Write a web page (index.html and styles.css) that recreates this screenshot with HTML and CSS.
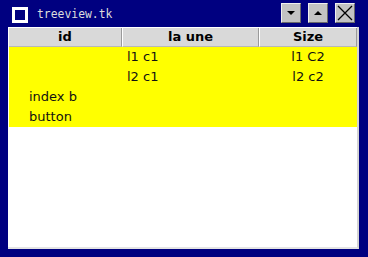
FILE: index.html
```html
<!DOCTYPE html>
<html>
<head>
<meta charset="utf-8">
<link rel="stylesheet" href="styles.css">
</head>
<body>
<div class="window">
  <div class="titlebar">
    <span class="app-icon"></span>
    <span class="title">treeview.tk</span>
    <div class="controls">
      <span class="btn"><svg width="10" height="10" viewBox="0 0 10 10"><polygon points="1,3 9,3 5,7" fill="#000"/></svg></span>
      <span class="btn"><svg width="10" height="10" viewBox="0 0 10 10"><polygon points="1,7 9,7 5,3" fill="#000"/></svg></span>
      <span class="btn"><svg width="18" height="18" viewBox="0 0 18 18"><path d="M2 2 L16 16 M16 2 L2 16" stroke="#000" stroke-width="1.3" fill="none"/></svg></span>
    </div>
  </div>
  <div class="content">
    <div class="tree">
      <div class="head">
        <div class="hcell">id</div>
        <div class="hcell">la une</div>
        <div class="hcell">Size</div>
      </div>
      <div class="rows">
        <div class="row"><span class="c1"></span><span class="c2">l1 c1</span><span class="c3">l1 C2</span></div>
        <div class="row"><span class="c1"></span><span class="c2">l2 c1</span><span class="c3">l2 c2</span></div>
        <div class="row"><span class="c1">index b</span><span class="c2"></span><span class="c3"></span></div>
        <div class="row"><span class="c1">button</span><span class="c2"></span><span class="c3"></span></div>
      </div>
    </div>
  </div>
</div>
</body>
</html>
```

FILE: styles.css
```css
html, body {
  margin: 0;
  padding: 0;
  background: #000080;
}
.window {
  width: 368px;
  height: 257px;
  display: flex;
  flex-direction: column;
  background: #000080;
}
.titlebar {
  height: 27px;
  display: flex;
  align-items: center;
  padding-left: 12px;
  box-sizing: border-box;
}
.app-icon {
  width: 10px;
  height: 10px;
  border: 3px solid #ffffff;
  flex: none;
  margin-top: 2px;
}
.title {
  margin-left: 9px;
  font-family: "DejaVu Sans Mono", monospace;
  font-size: 11.4px;
  color: #dcdcdc;
}
.controls {
  margin-left: auto;
  margin-right: 13px;
  display: flex;
  gap: 7px;
  margin-top: -1px;
}
.btn {
  width: 18px;
  height: 18px;
  background: #c3c3c3;
  border-top: 1px solid #f0f0f0;
  border-left: 1px solid #f0f0f0;
  border-right: 1px solid #6a6a6a;
  border-bottom: 1px solid #6a6a6a;
  display: flex;
  align-items: center;
  justify-content: center;
}
.content {
  flex: 1;
  margin: 0 9px 8px 8px;
  background: #ffffff;
  padding: 1px 0 0 1px;
  border-right: 2px solid #d4d4d4;
  border-bottom: 2px solid #e4e4e4;
}
.tree {
  font-family: "DejaVu Sans", sans-serif;
  font-size: 13px;
}
.head {
  display: grid;
  grid-template-columns: 113px 137px 98px;
  height: 19px;
}
.hcell {
  background: #d9d9d9;
  border-right: 1px solid #9a9a9a;
  border-left: 1px solid #ffffff;
  border-bottom: 1px solid #b8b8b8;
  font-weight: bold;
  color: #000;
  text-align: center;
  line-height: 17px;
}
.hcell:first-child {
  border-left: none;
}
.rows {
  background: #ffff00;
  width: 348px;
}
.row {
  display: grid;
  grid-template-columns: 113px 137px 98px;
  height: 20px;
  line-height: 20px;
  color: #111;
}
.c1 { padding-left: 20px; }
.c2 { padding-left: 5px; }
.c3 { text-align: center; }
```
